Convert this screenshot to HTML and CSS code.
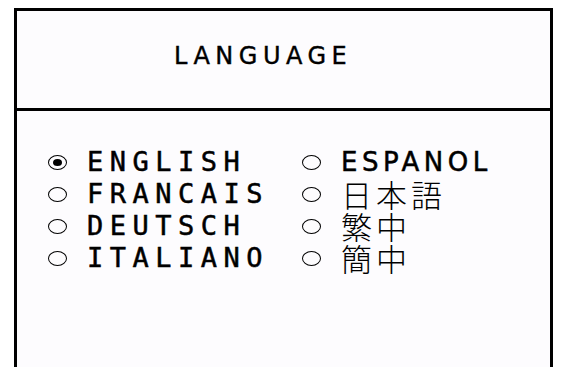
FILE: index.html
```html
<!DOCTYPE html>
<html>

<head>
    <title>Language</title>
    <link rel="stylesheet" href="styles.css">
</head>

<body>
    <div class="panel">
        <div class="header">
            <h2>LANGUAGE</h2>
        </div>
        <div class="options">
            <div class="option"><span class="radio checked"></span><span class="label">ENGLISH</span></div>
            <div class="option"><span class="radio"></span><span class="label wide">ESPANOL</span></div>
            <div class="option"><span class="radio"></span><span class="label">FRANCAIS</span></div>
            <div class="option"><span class="radio"></span><span class="label cjk">日本語</span></div>
            <div class="option"><span class="radio"></span><span class="label">DEUTSCH</span></div>
            <div class="option"><span class="radio"></span><span class="label cjk">繁中</span></div>
            <div class="option"><span class="radio"></span><span class="label">ITALIANO</span></div>
            <div class="option"><span class="radio"></span><span class="label cjk">簡中</span></div>
        </div>
    </div>
</body>
</html>
```

FILE: styles.css
```css
body{
    margin: 0;
    background-color: #ffffff;
    height: 367px;
    overflow: hidden;
}

.panel{
    margin: 8px 0 0 14px;
    width: 533px;
    height: 400px;
    border: 3px solid #000;
    border-bottom: none;
    background-color: #fdfcfe;
}

.header{
    height: 89px;
    padding: 0 0 8px 157px;
    border-bottom: 3px solid #000;
    display: flex;
    align-items: center;
}

h2{
    margin: 0;
    font-family: "DejaVu Sans", sans-serif;
    font-weight: normal;
    font-size: 24px;
    letter-spacing: 5.5px;
    color: #000;
    -webkit-text-stroke: 0.4px #000;
}

.options{
    display: grid;
    grid-template-columns: 254px auto;
    row-gap: 4px;
    padding: 37px 0 0 31px;
}

.option{
    display: flex;
    align-items: center;
    height: 28px;
}

.radio{
    width: 17px;
    height: 13px;
    border: 1.5px solid #000;
    border-radius: 50%;
    margin-right: 20px;
    display: flex;
    align-items: center;
    justify-content: center;
    flex-shrink: 0;
}

.radio.checked::after{
    content: "";
    width: 9px;
    height: 7px;
    border-radius: 50%;
    background-color: #000;
}

.label{
    font-family: "DejaVu Sans Mono", monospace;
    font-size: 27px;
    letter-spacing: 6.5px;
    line-height: 28px;
    color: #000;
    -webkit-text-stroke: 0.5px #000;
}

.label.wide{
    font-family: "DejaVu Sans", sans-serif;
    font-size: 26px;
    letter-spacing: 4.5px;
}

.label.cjk{
    font-family: "Noto Sans CJK JP", sans-serif;
    font-weight: 300;
    font-size: 31px;
    letter-spacing: 4px;
    line-height: 28px;
    -webkit-text-stroke: 0;
}
```
